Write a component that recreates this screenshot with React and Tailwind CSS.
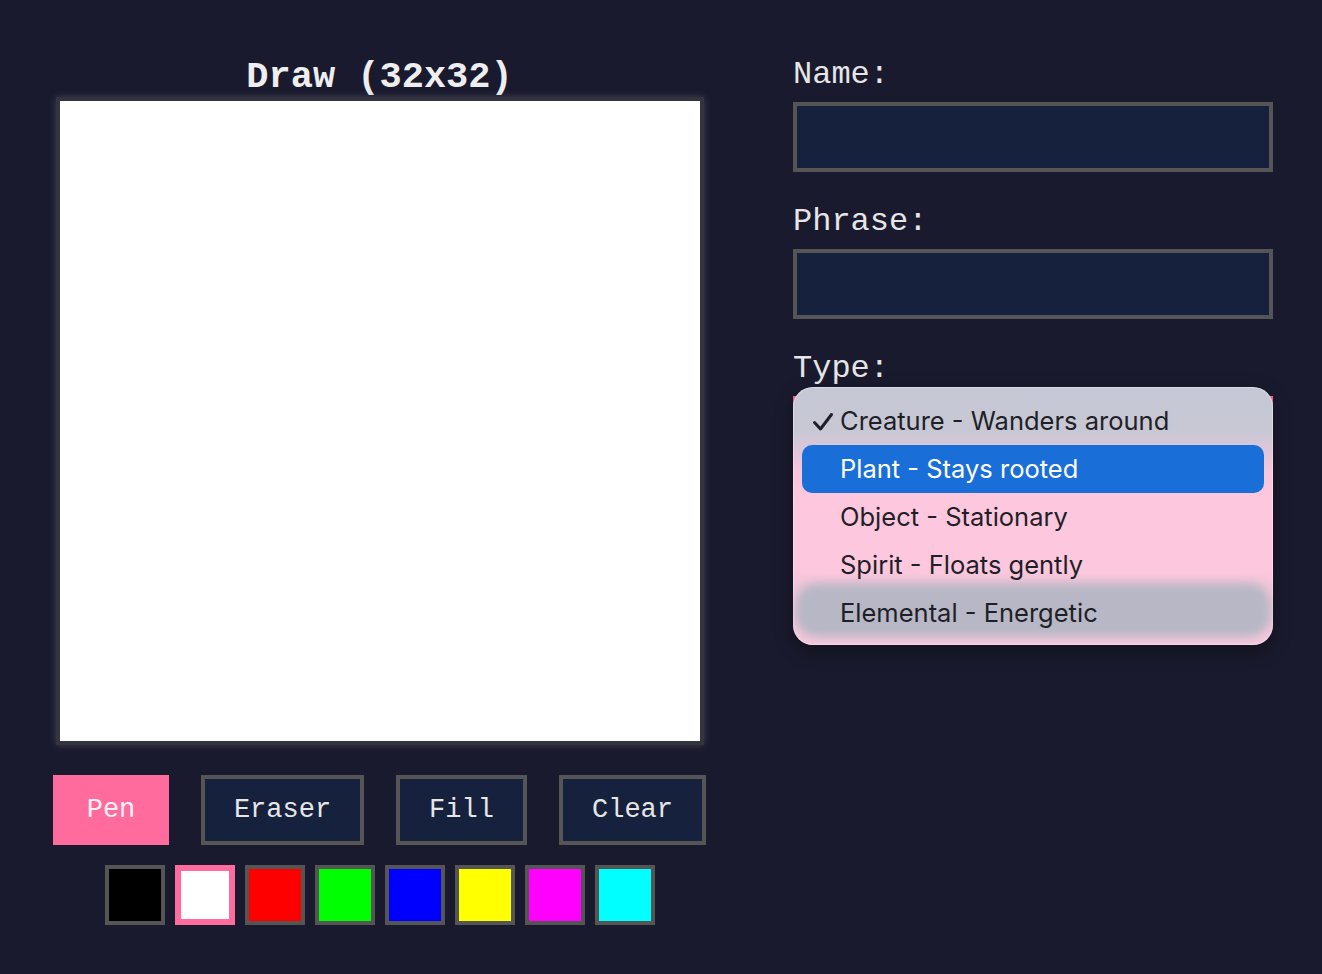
import React from "react";

const tools = [
  { label: "Pen", w: "w-[116px]", active: true },
  { label: "Eraser", w: "w-[163px]" },
  { label: "Fill", w: "w-[131px]" },
  { label: "Clear", w: "w-[147px]" },
];

const swatches = [
  { c: "bg-[#000000]" },
  { c: "bg-[#ffffff]", selected: true },
  { c: "bg-[#ff0000]" },
  { c: "bg-[#00ff00]" },
  { c: "bg-[#0000ff]" },
  { c: "bg-[#ffff00]" },
  { c: "bg-[#ff00ff]" },
  { c: "bg-[#00ffff]" },
];

const types = [
  { label: "Creature - Wanders around", checked: true },
  { label: "Plant - Stays rooted", hover: true },
  { label: "Object - Stationary" },
  { label: "Spirit - Floats gently" },
  { label: "Elemental - Energetic" },
];

function Field({ label, children, last }) {
  return (
    <div className={last ? "" : "mb-[34px]"}>
      <div className="h-[32px] text-[32px] leading-[32px] text-[#e6e6e6] mb-[11px]">{label}</div>
      {children}
    </div>
  );
}

function TypeMenu() {
  return (
    <div className="absolute left-[-4px] right-[-4px] top-[-13px] h-[258px] rounded-[20px] overflow-hidden bg-[linear-gradient(180deg,#c6c7d4_0%,#c8c8d5_17%,#dcc6d9_24%,#f6c6dc_32%,#fdc8de_45%,#fdc8de_70%,#f4c5da_76%,#f6c8dc_100%)] shadow-[0_6px_18px_rgba(0,0,0,0.35),inset_0_0_0_1px_rgba(255,255,255,0.35)] font-['Inter','Noto_Sans',sans-serif]">
      {/* soft grey haze behind the last row */}
      <div className="absolute left-[2px] right-[2px] bottom-[8px] h-[54px] rounded-[22px] bg-[#b7b7c5] blur-[5px]" />
      <div className="relative pt-[10px] pb-[8px] px-[9px]">
        {types.map((t) => (
          <div
            key={t.label}
            className={
              "relative h-[48px] flex items-center pl-[38px] rounded-[10px] text-[25.5px] leading-[48px] " +
              (t.hover ? "bg-[#1a6ed8] text-white" : "text-[#1f1f28]")
            }
          >
            {t.checked && (
              <svg className="absolute left-[10px] top-[15px]" width="22" height="20" viewBox="0 0 22 20">
                <path d="M2.5 10.5 L8.5 17 L19.5 2.5" fill="none" stroke="#1f1f28" strokeWidth="3" strokeLinecap="round" strokeLinejoin="round" />
              </svg>
            )}
            {t.label}
          </div>
        ))}
      </div>
    </div>
  );
}

export default function App() {
  return (
    <div className="min-h-screen w-full bg-[#1a1a2e] font-['Liberation_Mono','Courier_New',monospace]">
      <div className="flex pl-[53px] pt-[58px] gap-[87px]">
        {/* drawing column */}
        <div className="w-[653px] flex flex-col items-center">
          <h2 className="text-[37px] leading-[38px] font-bold text-[#eeeeee] mb-[1px]">Draw (32x32)</h2>
          <div className="w-[648px] h-[648px] border-4 border-[#34343f] bg-white shadow-[0_0_7px_rgba(110,110,130,0.45)]" />
          <div className="mt-[30px] flex gap-8">
            {tools.map((t) => (
              <button
                key={t.label}
                className={
                  t.w +
                  " h-[70px] border-4 text-[27px] leading-none flex items-center justify-center " +
                  (t.active
                    ? "bg-[#ff6b9d] border-[#ff6b9d] text-[#fff2f6]"
                    : "bg-[#16213e] border-[#555555] text-[#e6e6e6]")
                }
              >
                {t.label}
              </button>
            ))}
          </div>
          <div className="mt-[20px] flex gap-[10px]">
            {swatches.map((s, i) => (
              <div
                key={i}
                className={
                  "w-[60px] h-[60px] " +
                  s.c +
                  (s.selected ? " border-[6px] border-[#ff6b9d]" : " border-4 border-[#555555]")
                }
              />
            ))}
          </div>
        </div>

        {/* details column */}
        <div className="w-[480px] pt-[1px]">
          <Field label="Name:">
            <div className="h-[70px] border-4 border-[#555555] bg-[#16213e]" />
          </Field>
          <Field label="Phrase:">
            <div className="h-[70px] border-4 border-[#555555] bg-[#16213e]" />
          </Field>
          <Field label="Type:" last>
            <div className="relative h-[70px] border-4 border-[#ff6b9d] bg-[#16213e]">
              <TypeMenu />
            </div>
          </Field>
        </div>
      </div>
    </div>
  );
}
